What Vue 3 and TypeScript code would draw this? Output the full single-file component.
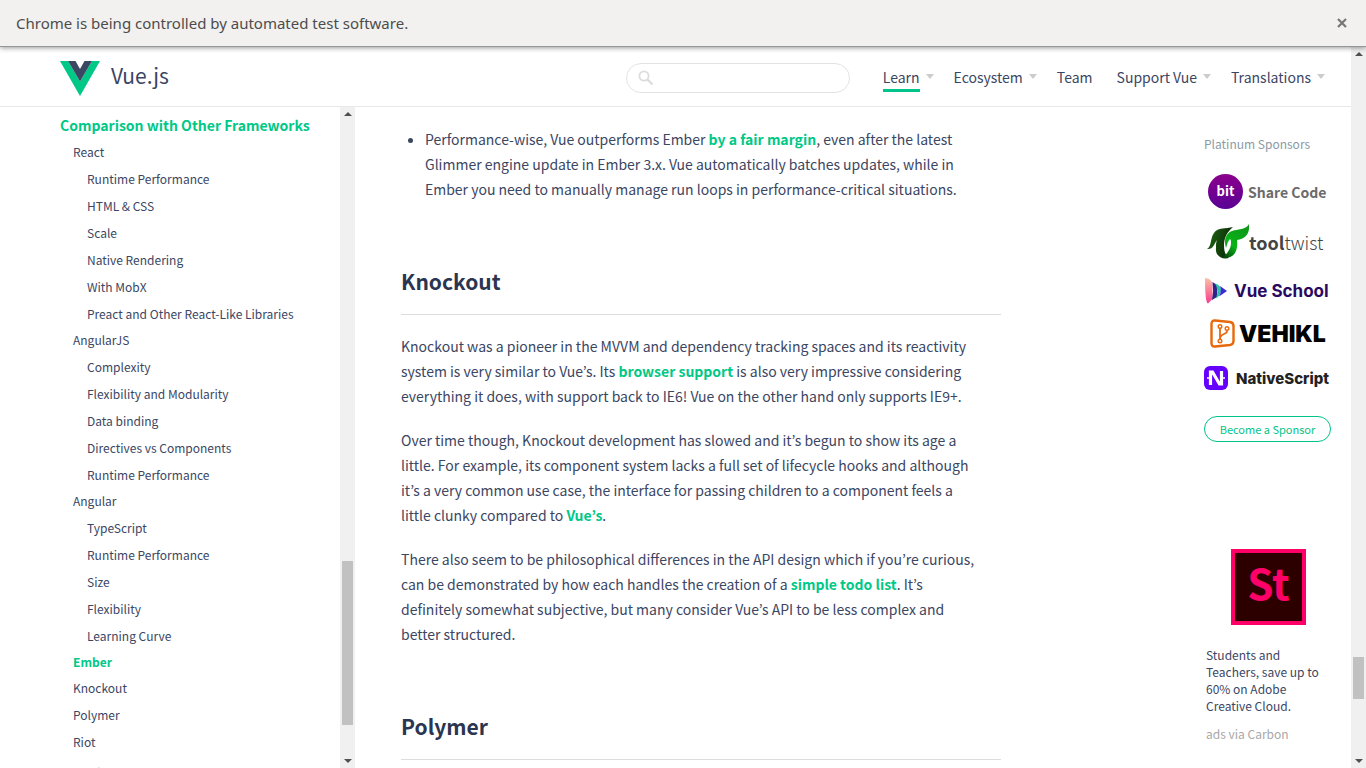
<script setup lang="ts">
interface NavItem {
  label: string
  menu: boolean
  active?: boolean
}

interface Section {
  label: string
  active?: boolean
  children?: string[]
}

const navItems: NavItem[] = [
  { label: 'Learn', menu: true, active: true },
  { label: 'Ecosystem', menu: true },
  { label: 'Team', menu: false },
  { label: 'Support Vue', menu: true },
  { label: 'Translations', menu: true },
]

const sections: Section[] = [
  {
    label: 'React',
    children: [
      'Runtime Performance',
      'HTML & CSS',
      'Scale',
      'Native Rendering',
      'With MobX',
      'Preact and Other React-Like Libraries',
    ],
  },
  {
    label: 'AngularJS',
    children: [
      'Complexity',
      'Flexibility and Modularity',
      'Data binding',
      'Directives vs Components',
      'Runtime Performance',
    ],
  },
  {
    label: 'Angular',
    children: ['TypeScript', 'Runtime Performance', 'Size', 'Flexibility', 'Learning Curve'],
  },
  { label: 'Ember', active: true },
  { label: 'Knockout' },
  { label: 'Polymer' },
  { label: 'Riot' },
]
</script>

<template>
  <div class="window">
    <div class="infobar" role="status">
      <span>Chrome is being controlled by automated test software.</span>
      <button class="close" type="button" aria-label="Close">
        <svg width="10" height="10" viewBox="0 0 10 10"><path d="M1 1 9 9M9 1 1 9" stroke="#777" stroke-width="2.2" fill="none" /></svg>
      </button>
    </div>

    <div class="viewport">
      <div class="page">
        <header class="header">
          <a class="brand" href="#">
            <svg width="40" height="35" viewBox="0 0 40 35">
              <path d="M0 0H8L20 20.500 32 0H40L20 35Z" fill="#00c886" />
              <path d="M8 0H15.500L20 8 24.500 0H32L20 20.500Z" fill="#3b4663" />
            </svg>
            <span>Vue.js</span>
          </a>
          <div class="header-right">
            <label class="search">
              <svg width="16" height="16" viewBox="0 0 16 16" fill="none" stroke="#dcdcdc">
                <circle cx="6" cy="6" r="4.600" stroke-width="1.800" />
                <path d="M9.500 9.500 14.500 14.500" stroke-width="2.400" />
              </svg>
              <input type="text" aria-label="Search" />
            </label>
            <nav class="nav">
              <a
                v-for="item in navItems"
                :key="item.label"
                href="#"
                :class="{ active: item.active, plain: !item.menu }"
              >
                <span>{{ item.label }}</span>
                <i v-if="item.menu" class="caret"></i>
              </a>
            </nav>
          </div>
        </header>

        <div class="body">
          <aside class="sidebar">
            <div class="toc">
              <a class="toc-title" href="#">Comparison with Other Frameworks</a>
              <ul>
                <li v-for="s in sections" :key="s.label" :class="{ group: s.children || s.active }">
                  <a href="#" :class="{ current: s.active }">{{ s.label }}</a>
                  <ul v-if="s.children">
                    <li v-for="c in s.children" :key="c"><a href="#">{{ c }}</a></li>
                  </ul>
                </li>
              </ul>
              <a class="toc-next" href="#">Join the Vue.js Community!</a>
            </div>
            <div class="scrollbar side-scroll">
              <i class="up"></i>
              <div class="track"><div class="thumb"></div></div>
              <i class="down"></i>
            </div>
          </aside>

          <main class="content">
            <ul class="bullets">
              <li>
                Performance-wise, Vue outperforms Ember <a href="#">by a fair margin</a>, even after the latest<br />
                Glimmer engine update in Ember 3.x. Vue automatically batches updates, while in<br />
                Ember you need to manually manage run loops in performance-critical situations.
              </li>
            </ul>
            <h2>Knockout</h2>
            <p>
              Knockout was a pioneer in the MVVM and dependency tracking spaces and its reactivity<br />
              system is very similar to Vue’s. Its <a href="#">browser support</a> is also very impressive considering<br />
              everything it does, with support back to IE6! Vue on the other hand only supports IE9+.
            </p>
            <p>
              Over time though, Knockout development has slowed and it’s begun to show its age a<br />
              little. For example, its component system lacks a full set of lifecycle hooks and although<br />
              it’s a very common use case, the interface for passing children to a component feels a<br />
              little clunky compared to <a href="#">Vue’s</a>.
            </p>
            <p>
              There also seem to be philosophical differences in the API design which if you’re curious,<br />
              can be demonstrated by how each handles the creation of a <a href="#">simple todo list</a>. It’s<br />
              definitely somewhat subjective, but many consider Vue’s API to be less complex and<br />
              better structured.
            </p>
            <h2>Polymer</h2>
          </main>

          <aside class="sponsors">
            <h3>Platinum Sponsors</h3>
            <a class="logo bit" href="#">
              <svg width="35" height="35" viewBox="0 0 35 35">
                <defs>
                  <linearGradient id="bitFill" x1="0" y1="0" x2="0" y2="1">
                    <stop offset="0" stop-color="#8b008b" />
                    <stop offset="1" stop-color="#5a0096" />
                  </linearGradient>
                </defs>
                <circle cx="17.500" cy="17.500" r="17.500" fill="url(#bitFill)" />
                <text x="17.500" y="22" text-anchor="middle" class="bit-text">bit</text>
              </svg>
              <span>Share Code</span>
            </a>
            <a class="logo tooltwist" href="#">
              <svg width="42" height="36" viewBox="0 0 42 36">
                <defs>
                  <linearGradient id="leafDark" x1="0" y1="0" x2="1" y2="0.300">
                    <stop offset="0" stop-color="#1f6a12" />
                    <stop offset="1" stop-color="#0b2a06" />
                  </linearGradient>
                  <linearGradient id="leafLight" x1="0" y1="1" x2="0.600" y2="0">
                    <stop offset="0" stop-color="#06380a" />
                    <stop offset="0.450" stop-color="#08b418" />
                    <stop offset="1" stop-color="#0d9a17" />
                  </linearGradient>
                </defs>
                <path d="M0 25C5 22 3 14 7 9C11 3 19 5 26 3C20 8 17 14 17 21C17 27 18 31 22 34C14 36 8 31 9 24C9 20 9 19 10 16C7 20 6 26 0 25Z" fill="url(#leafDark)" />
                <path d="M42 0C43 9 39 15 30 16C31 25 29 35 15 34C20 30 24 25 24 19C24 17 24 16 23 15C21 17 20 20 19 24C16 14 20 7 29 6C34 5 39 5 42 0Z" fill="url(#leafLight)" />
              </svg>
              <span><b>tool</b>twist</span>
            </a>
            <a class="logo school" href="#">
              <svg width="23" height="26" viewBox="0 0 23 26">
                <defs>
                  <linearGradient id="schoolPink" x1="0" y1="0" x2="0" y2="1">
                    <stop offset="0" stop-color="#fbc0a8" />
                    <stop offset="1" stop-color="#fb3c8c" />
                  </linearGradient>
                </defs>
                <path d="M1 0C5 0 8 3 8.500 6V21L4 25.500Q1 25 1 0Z" fill="url(#schoolPink)" />
                <path d="M8.500 4 13 7V19L8 22Q10 13 8.500 4Z" fill="#33208a" />
                <path d="M11 5.500Q17 7 17 12Q17 17 12 20.500Q15 12 11 5.500Z" fill="#2cc3a5" />
                <path d="M16 8 23 13 15 18.500Q18 13 16 8Z" fill="#3a2ad8" />
              </svg>
              <span>Vue School</span>
            </a>
            <a class="logo vehikl" href="#">
              <svg width="25" height="29" viewBox="0 0 25 29" fill="none" stroke="#e8690b">
                <path d="M5 1.500 20 3Q23.500 3.500 23.500 7V22Q23.500 25.500 20 26L5 27.500Q1.500 28 1.500 24V5Q1.500 1.200 5 1.500Z" stroke-width="2.400" />
                <path d="M10 9V20M17 12C17 16 10 14 10 20" stroke-width="1.800" />
                <circle cx="10" cy="7.500" r="1.800" stroke-width="1.400" />
                <circle cx="17" cy="9.500" r="1.800" stroke-width="1.400" />
                <circle cx="10" cy="22" r="1.800" stroke-width="1.400" />
              </svg>
              <span>VEHIKL</span>
            </a>
            <a class="logo native" href="#">
              <svg width="24" height="24" viewBox="0 0 24 24">
                <rect width="24" height="24" rx="6" fill="#6500ff" />
                <path d="M6.500 19V6H8.500L15.500 18H17.500V5" fill="none" stroke="#fff" stroke-width="3.200" />
                <path d="M3 12H6M18 12H21" stroke="#fff" stroke-width="1.600" />
              </svg>
              <span>NativeScript</span>
            </a>
            <a class="become" href="#">Become a Sponsor</a>
            <div class="ad">
              <a class="ad-image" href="#" aria-label="Adobe Stock">St</a>
              <a class="ad-text" href="#">Students and Teachers, save up to 60% on Adobe Creative Cloud.</a>
              <a class="ad-via" href="#">ads via Carbon</a>
            </div>
          </aside>
        </div>
      </div>
      <div class="scrollbar page-scroll">
        <i class="up"></i>
        <div class="track"><div class="thumb"></div></div>
        <i class="down"></i>
      </div>
    </div>
  </div>
</template>

<style>
body {
  margin: 0;
}
</style>

<style scoped>
* {
  box-sizing: border-box;
}
.window {
  display: flex;
  flex-direction: column;
  height: 100vh;
  overflow: hidden;
  background: #fff;
  color: #3b4663;
  font-family: 'Noto Sans CJK KR', 'Open Sans', sans-serif;
  font-size: 14px;
}
a {
  color: inherit;
  text-decoration: none;
}
ul {
  list-style: none;
  margin: 0;
  padding: 0;
}
.infobar {
  display: flex;
  flex: none;
  align-items: center;
  justify-content: space-between;
  height: 47px;
  padding: 0 19px 0 16px;
  background: #f2f1f0;
  border-bottom: 1px solid #969696;
  box-shadow: 0 1px 5px rgba(0, 0, 0, 0.4);
  color: #4c4c4c;
  font-family: 'Noto Sans', sans-serif;
  font-size: 15px;
  position: relative;
  z-index: 1;
}
.close {
  display: flex;
  padding: 0;
  border: 0;
  background: none;
}
.viewport {
  display: flex;
  flex: 1;
  min-height: 0;
}
.page {
  display: flex;
  flex: 1;
  flex-direction: column;
  min-width: 0;
}
.header {
  display: flex;
  flex: none;
  align-items: center;
  justify-content: space-between;
  height: 60px;
  padding: 0 26px 0 60px;
  border-bottom: 1px solid #e8e8e8;
}
.brand {
  display: flex;
  align-items: flex-start;
  gap: 11px;
  padding-top: 3px;
  font-size: 21px;
  line-height: 29px;
}
.header-right {
  display: flex;
  align-items: center;
  gap: 33px;
}
.search {
  display: flex;
  align-items: center;
  width: 224px;
  height: 30px;
  margin-top: 2px;
  padding: 0 12px 0 11px;
  border: 1px solid #e3e3e3;
  border-radius: 15px;
}
.search input {
  flex: 1;
  min-width: 0;
  border: 0;
  outline: 0;
  background: none;
}
.nav {
  display: flex;
  gap: 20px;
  font-size: 14px;
  line-height: 24px;
}
.nav a {
  display: flex;
  align-items: center;
  gap: 6px;
}
.nav a span {
  padding: 3px 0 0;
  border-bottom: 3px solid transparent;
}
.nav a.active span {
  border-bottom-color: #00c48a;
}
.nav a.plain {
  margin-right: 4px;
}
.caret {
  border: 4px solid transparent;
  border-top: 5px solid #ccc;
  border-bottom: 0;
}
.body {
  display: flex;
  flex: 1;
  min-height: 0;
}
.sidebar {
  display: flex;
  flex: none;
  width: 355px;
}
.toc {
  flex: 1;
  overflow: hidden;
  padding: 5px 0 0 60px;
  font-size: 12px;
  line-height: 27px;
  white-space: nowrap;
}
.toc a {
  display: block;
}
.toc ul {
  padding-left: 14px;
}
.toc > ul {
  padding-left: 13px;
}
.toc .group {
  margin-bottom: -1px;
}
.toc .toc-title,
.toc .toc-next {
  font-size: 14px;
}
.toc .toc-title {
  line-height: 26px;
}
.toc .toc-next {
  margin-top: 5px;
}
.toc .toc-title,
.toc .current,
.content a {
  color: #00c886;
  font-weight: 600;
}
.scrollbar {
  display: flex;
  flex: none;
  flex-direction: column;
  align-items: center;
  width: 15px;
  padding: 5px 0;
  background: #f0f0f0;
}
.up,
.down {
  border: 4px solid transparent;
}
.up {
  border-top: 0;
  border-bottom-color: #505050;
}
.down {
  border-bottom: 0;
  border-top-color: #505050;
}
.track {
  display: flex;
  flex: 1;
  flex-direction: column;
  width: 11px;
}
.thumb {
  flex: 1;
  background: #c1c1c1;
}
.side-scroll .track {
  padding: 445px 0 34px;
}
.page-scroll .track {
  padding: 601px 0 60px;
}
.content {
  width: 600px;
  margin-left: 46px;
  padding-top: 20px;
  font-size: 14px;
  line-height: 25px;
}
.content p {
  margin: 0 0 19px;
}
.bullets {
  padding-left: 24px;
  list-style: disc;
}
h2 {
  margin: 59px 0 19px;
  padding-bottom: 13px;
  border-bottom: 1px solid #ddd;
  color: #2b3551;
  font-size: 21px;
  font-weight: 600;
  line-height: 40px;
}
.sponsors {
  display: flex;
  flex-direction: column;
  width: 127px;
  margin-left: auto;
  margin-right: 20px;
  padding-top: 27px;
}
h3 {
  margin: 0 0 20px;
  color: #8c9aa6;
  font-size: 12px;
  font-weight: 400;
  line-height: 20px;
}
.logo {
  display: flex;
  align-items: center;
  white-space: nowrap;
}
.bit {
  gap: 5px;
  height: 35px;
  padding-left: 4px;
  color: #6b6b6b;
  font-size: 14px;
  font-weight: 700;
  line-height: 18px;
}
.bit-text {
  fill: #fff;
  font-size: 13px;
  font-weight: 700;
}
.tooltwist {
  height: 36px;
  margin-top: 15px;
  padding-left: 3px;
  color: #444;
  font-size: 18px;
  font-weight: 300;
}
.tooltwist b {
  font-weight: 700;
}
.school {
  gap: 7px;
  height: 26px;
  margin-top: 18px;
  color: #2a0a60;
  font-family: Inter, sans-serif;
  font-size: 17px;
  font-weight: 700;
}
.vehikl {
  gap: 4px;
  height: 29px;
  margin-top: 15px;
  padding-left: 6px;
  color: #000;
  font-family: Inter, sans-serif;
  font-size: 23px;
  font-weight: 900;
}
.native {
  gap: 8px;
  height: 24px;
  margin-top: 18px;
  color: #222;
  font-family: Inter, sans-serif;
  font-size: 15px;
  font-weight: 800;
}
.become {
  height: 26px;
  margin-top: 26px;
  border: 1px solid #00c48a;
  border-radius: 13px;
  color: #00c48a;
  font-size: 11px;
  line-height: 24px;
  text-align: center;
}
.ad {
  display: flex;
  flex-direction: column;
  margin-top: 107px;
  padding: 0 2px;
  font-size: 12px;
  line-height: 17px;
}
.ad-image {
  width: 75px;
  height: 76px;
  margin: 0 0 21px 25px;
  border: 4px solid #ff0068;
  background: #2d0000;
  color: #ff0068;
  font-size: 42px;
  font-weight: 700;
  line-height: 58px;
  text-align: center;
}
.ad-text {
  margin-bottom: 11px;
}
.ad-via {
  color: #a8a8a8;
}
</style>
